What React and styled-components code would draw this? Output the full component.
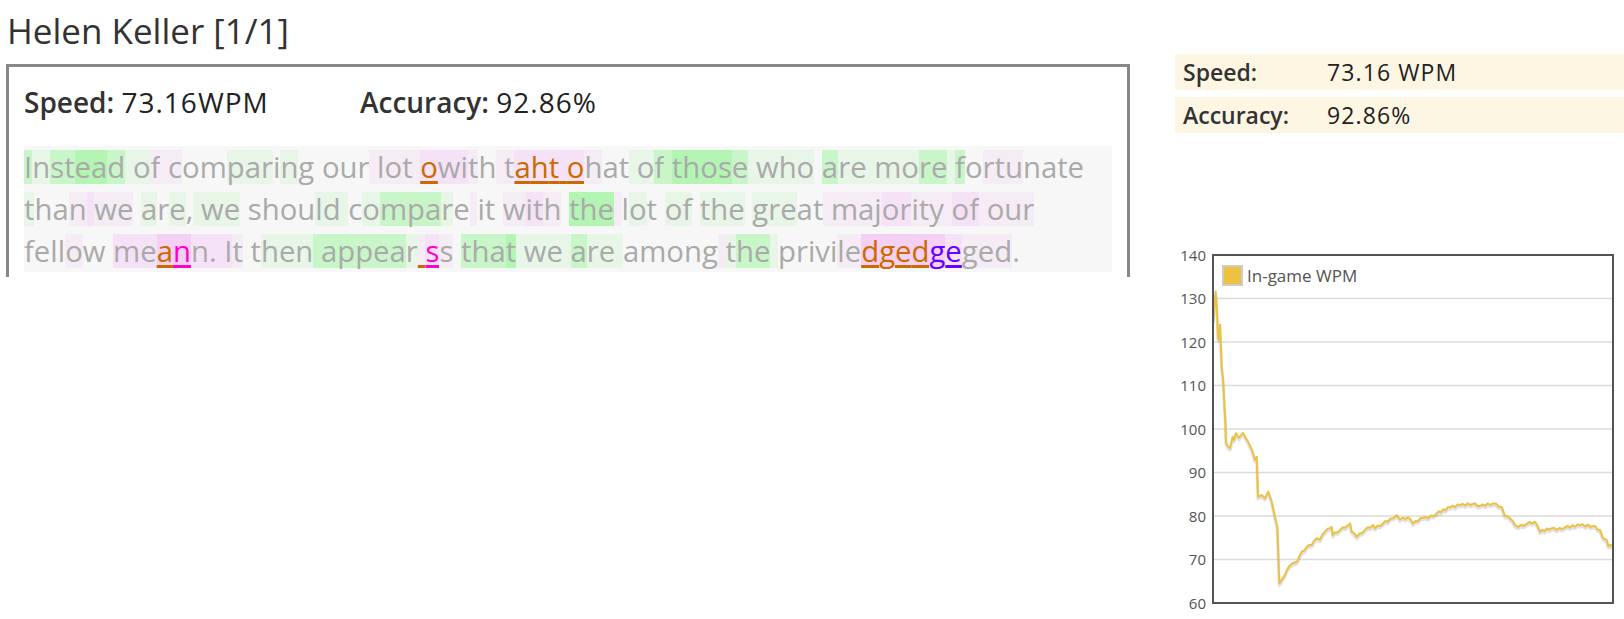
import React from 'react';
import styled, { createGlobalStyle } from 'styled-components';

const GlobalStyle = createGlobalStyle`
  html, body {
    margin: 0;
    padding: 0;
    background: #fff;
    overflow: hidden;
  }
  body {
    font-family: "Open Sans", "Liberation Sans", sans-serif;
    color: #333;
  }
`;

// typing speed per keystroke, as a tint behind the letter
const shades = {
  G: '#b4f5b4',
  g: '#c9f6c9',
  l: '#e7f6e7',
  P: '#f5d0f5',
  p: '#f6e2f6',
  q: '#f5ecf5',
};

const errColors = {
  o: '#cc6a00',
  m: '#ff00cc',
  v: '#6600ff',
};

const passage = [
  {
    text: 'Instead of comparing our lot owith taht ohat of those who are more fortunate',
    shade:
      'glggGGgl' + 'lqqq' + '..lll.l.' + '....' + 'qqqqq' + 'ppp' + 'q.qq' + 'ppppp' + 'q..' +
      'll' + 'gg' + 'GGGG' + 'g' + 'llll' + '.' + 'gll' + 'lll' + 'gg' + 'l' + 'g' + '.' + 'qqq' + '....',
    errors: [[29, 30, 'o'], [36, 41, 'o']],
  },
  {
    text: 'than we are, we should compare it with the lot of the great majority of our',
    shade:
      'l..q' + 'p' + 'qq' + '.' + 'l.l' + '.' + 'l' + 'll' + '.' + '....' + 'll' + 'l' + '.' + 'l' +
      'ggg' + 'l' + '.' + 'q' + '...' + 'qppq' + '.' + 'GGG' + 'q' + '.l.' + '.' + 'll' + '.' + 'lll' +
      '.' + 'lll' + '..' + 'q' + 'qqqp' + 'pqqq' + 'q' + 'pp' + 'q' + 'qqq',
    errors: [],
  },
  {
    text: 'fellow meann. It then appear ss that we are among the priviledgedgeged.',
    shade:
      '....' + 'q' + '..' + 'pp' + 'PP' + 'pppp' + 'q' + '.' + '.' + 'lll' + 'ggggg' + 'gl' + 'q' + 'p' +
      'q' + '.' + 'ggg' + 'G' + 'lll' + 'l' + 'g' + 'l' + 'l' + 'l' + '.....' + 'q' + 'l' + 'gg' + 'l' +
      '.....' + 'qq' + 'PPPPP' + 'p' + 'qqq' + '.',
    errors: [[9, 10, 'o'], [10, 11, 'm'], [28, 29, 'o'], [29, 30, 'm'], [61, 65, 'o'], [65, 67, 'v']],
  },
];

const wpmKeys = [
  [1213.3, 124.6], [1215.7, 131.6], [1217, 127], [1218, 121], [1219, 120.5], [1220, 124],
  [1221.7, 114], [1223, 111.6], [1225.5, 101], [1226, 96.8], [1228, 96], [1230, 95.6],
  [1232.7, 98.2], [1234, 97.5], [1236, 99], [1239, 98], [1243, 99.1], [1248, 97.1],
  [1252, 95.2], [1255, 92.9], [1256.7, 93.6], [1258, 84.4], [1261.7, 84.8], [1265, 84.1],
  [1268.3, 85.6], [1271.7, 83.3], [1275, 79.8], [1277.3, 77.5], [1279.3, 64.5], [1285, 66.5],
  [1290, 68.7], [1293, 69.2], [1297, 69.5], [1300, 71], [1306.7, 72.9], [1311.7, 73.3],
  [1316.7, 74.9], [1320, 74.6], [1325, 76.4], [1330, 77.2], [1331.7, 77.5], [1332.7, 75.6],
  [1340, 76.8], [1348.3, 77.9], [1350, 78.3], [1351.7, 76.4], [1356.7, 75.2], [1365, 76.8],
  [1373, 77.9], [1375, 77.2], [1383, 78.3], [1393, 79.5], [1396.7, 80.2], [1400, 79.2],
  [1408, 79.7], [1413, 78.3], [1423, 79.6], [1428, 79.5], [1436.7, 80.6], [1450, 82],
  [1460, 82.5], [1473, 82.8], [1480, 82.3], [1493, 82.9], [1501.7, 82.1], [1505, 80],
  [1510, 79.5], [1515, 77.9], [1518.3, 77.5], [1526.7, 78.2], [1535, 78.7], [1540, 76.4],
  [1551.7, 77.2], [1556.7, 76.8], [1565, 77.4], [1580, 77.9], [1593, 77.7], [1600, 76.8],
  [1603, 74.9], [1606.7, 74.5], [1608.3, 73.1], [1613, 73.1],
];

// fill in the small per-keystroke wobble between the key points
const wpm = (() => {
  const out = [];
  for (let i = 0; i < wpmKeys.length - 1; i++) {
    const [x1, v1] = wpmKeys[i];
    const [x2, v2] = wpmKeys[i + 1];
    out.push([x1, v1]);
    if (x1 < 1280) continue;
    const steps = Math.floor((x2 - x1) / 2.2);
    for (let s = 1; s < steps; s++) {
      const t = s / steps;
      const wobble = s % 2 ? 0.25 : -0.2;
      out.push([x1 + (x2 - x1) * t, v1 + (v2 - v1) * t + wobble]);
    }
  }
  out.push(wpmKeys[wpmKeys.length - 1]);
  return out;
})();

const Page = styled.div`
  display: flex;
  align-items: flex-start;
  width: 1624px;
`;

const LeftColumn = styled.div`
  width: 1124px;
  margin-left: 6px;
`;

const Title = styled.h1`
  margin: 7px 0 9px 1px;
  font-size: 35px;
  font-weight: 400;
  line-height: 48px;
  color: #333;
`;

const ResultBox = styled.div`
  border: 3px solid #888;
  border-bottom: none;
  padding: 17px 15px 5px;
`;

const StatsRow = styled.div`
  display: flex;
  font-size: 28px;
  line-height: 36px;
  margin-bottom: 26px;
  color: #222;
`;

const Stat = styled.div`
  width: ${(p) => p.$width || 'auto'};
  white-space: nowrap;
`;

const StatLabel = styled.span`
  font-weight: 600;
  color: #333;
`;

const StatValue = styled.span`
  letter-spacing: 1px;
`;

const Passage = styled.div`
  background: #f7f7f7;
  font-size: 29.3px;
  line-height: 42px;
  color: #aaa;
`;

const Line = styled.div`
  height: 42px;
  white-space: pre;
`;

const Char = styled.span`
  display: inline-block;
  line-height: 34px;
  white-space: pre;
  background: ${(p) => shades[p.$shade] || 'transparent'};
  color: ${(p) => (p.$err ? errColors[p.$err] : 'inherit')};
  text-decoration: ${(p) => (p.$err ? 'underline' : 'none')};
  text-decoration-thickness: 3px;
  text-underline-offset: 3px;
`;

const Side = styled.div`
  flex: 1;
  margin-left: 45px;
`;

const Summary = styled.div`
  display: flex;
  flex-direction: column;
  gap: 7px;
  margin-top: 54px;
`;

const SummaryRow = styled.div`
  display: flex;
  height: 36px;
  line-height: 36px;
  background: #fdf6e3;
  font-size: 23px;
  color: #222;
`;

const SummaryLabel = styled.div`
  width: 152px;
  padding-left: 8px;
  box-sizing: border-box;
  font-weight: 600;
  color: #333;
`;

const SummaryValue = styled.div`
  letter-spacing: 1.1px;
`;

const ChartBox = styled.div`
  margin-top: 107px;
  height: 379px;
  svg {
    display: block;
  }
`;

function PassageLine({ line }) {
  const chars = line.text.split('');
  const errAt = (i) => {
    const hit = line.errors.find(([a, b]) => i >= a && i < b);
    return hit ? hit[2] : null;
  };
  return (
    <Line>
      {chars.map((ch, i) => (
        <Char key={i} $shade={line.shade[i]} $err={errAt(i)}>
          {ch}
        </Char>
      ))}
    </Line>
  );
}

function WpmChart() {
  const left = 38;
  const top = 15;
  const width = 400;
  const height = 348;
  const y = (v) => top + (140 - v) * (height / 80);
  const pts = wpm.map(([xf, v]) => `${(xf - 1175).toFixed(1)},${y(v).toFixed(1)}`).join(' ');
  const ticks = [60, 70, 80, 90, 100, 110, 120, 130, 140];

  return (
    <svg width="449" height="379" viewBox="0 0 449 379">
      {ticks.slice(1, -1).map((t) => (
        <line key={t} x1={left} x2={left + width} y1={y(t)} y2={y(t)} stroke="#dcdcdc" strokeWidth="1.5" />
      ))}
      {ticks.map((t) => (
        <text
          key={t}
          x="31"
          y={y(t) + 5.5}
          textAnchor="end"
          fontSize="15"
          fill="#545454"
          fontFamily='"Open Sans", sans-serif'
        >
          {t}
        </text>
      ))}
      <polyline
        points={pts}
        fill="none"
        stroke="rgba(0,0,0,0.12)"
        strokeWidth="3"
        strokeLinejoin="round"
        transform="translate(0,2)"
      />
      <polyline points={pts} fill="none" stroke="#edc240" strokeWidth="2" strokeLinejoin="round" />
      <rect x={left} y={top} width={width} height={height} fill="none" stroke="#545454" strokeWidth="2" />
      <rect x="48" y="26" width="19" height="19" fill="#edc240" stroke="#ccc" strokeWidth="2" />
      <text x="72" y="41.7" fontSize="17" fill="#545454" fontFamily='"Open Sans", sans-serif'>
        In-game WPM
      </text>
    </svg>
  );
}

export default function App() {
  return (
    <>
      <GlobalStyle />
      <Page>
        <LeftColumn>
          <Title>Helen Keller [1/1]</Title>
          <ResultBox>
            <StatsRow>
              <Stat $width="336px">
                <StatLabel>Speed:</StatLabel> <StatValue>73.16WPM</StatValue>
              </Stat>
              <Stat>
                <StatLabel>Accuracy:</StatLabel> <StatValue>92.86%</StatValue>
              </Stat>
            </StatsRow>
            <Passage>
              {passage.map((line, i) => (
                <PassageLine key={i} line={line} />
              ))}
            </Passage>
          </ResultBox>
        </LeftColumn>
        <Side>
          <Summary>
            <SummaryRow>
              <SummaryLabel>Speed:</SummaryLabel>
              <SummaryValue>73.16 WPM</SummaryValue>
            </SummaryRow>
            <SummaryRow>
              <SummaryLabel>Accuracy:</SummaryLabel>
              <SummaryValue>92.86%</SummaryValue>
            </SummaryRow>
          </Summary>
          <ChartBox>
            <WpmChart />
          </ChartBox>
        </Side>
      </Page>
    </>
  );
}
